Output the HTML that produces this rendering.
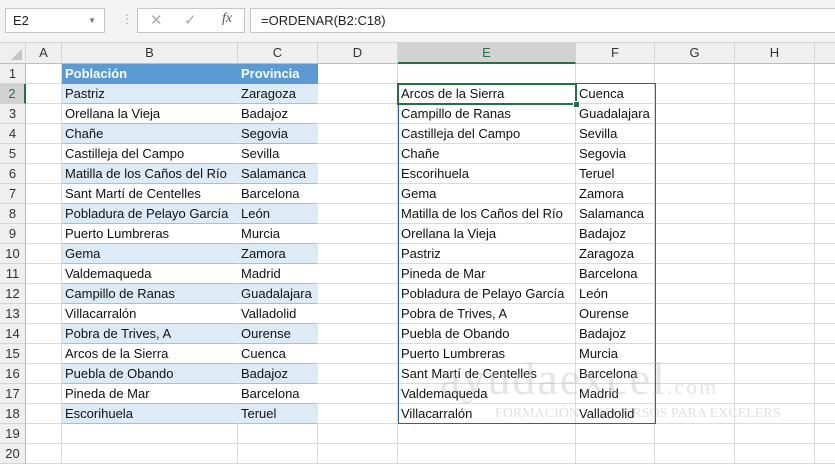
<!DOCTYPE html>
<html><head><meta charset="utf-8"><style>
body{margin:0;width:835px;height:466px;overflow:hidden;background:#fff;font-family:"Liberation Sans",sans-serif;position:relative}
.top{position:absolute;left:0;top:0;width:835px;height:42px;background:#f3f3f3;border-bottom:1px solid #d4d4d4}
.nb{position:absolute;left:5px;top:8px;width:100px;height:25px;background:#fff;border:1px solid #c6c6c6;box-sizing:border-box;font-size:13px;line-height:23px;padding-left:7px;color:#222}
.fx{position:absolute;left:137px;top:8px;width:108px;height:25px;background:#fff;border:1px solid #c6c6c6;box-sizing:border-box}
.fb{position:absolute;left:250px;top:8px;width:590px;height:25px;background:#fff;border:1px solid #c6c6c6;box-sizing:border-box;font-size:13px;line-height:23px;padding-left:10px;color:#222}
.ch{position:absolute;top:43px;height:21px;background:#efefef;border-right:1px solid #d4d4d4;border-bottom:1px solid #bdbdbd;box-sizing:border-box;text-align:center;font-size:13px;line-height:20px;color:#333}
.rh{position:absolute;left:0;width:26px;height:20px;background:#efefef;border-bottom:1px solid #d4d4d4;border-right:1px solid #bdbdbd;box-sizing:border-box;text-align:center;font-size:13px;line-height:20px;color:#333}
.c{position:absolute;height:20px;box-sizing:border-box;border-right:1px solid #dadada;border-bottom:1px solid #dadada;font-size:13px;line-height:20px;padding-left:3px;white-space:nowrap;overflow:hidden;color:#111}
</style></head><body>
<div class="top">
<div class="nb">E2<span style="position:absolute;right:8px;top:0;font-size:8px;color:#777">▼</span></div>
<div style="position:absolute;left:121px;top:12px;color:#aaa;font-size:12px">⋮</div>
<div class="fx"><span style="position:absolute;left:12px;top:2px;color:#aaa;font-size:15px">✕</span><span style="position:absolute;left:46px;top:2px;color:#aaa;font-size:15px">✓</span><span style="position:absolute;left:84px;top:2px;color:#555;font-size:14px;font-style:italic;font-family:'Liberation Serif',serif">fx</span></div>
<div class="fb">=ORDENAR(B2:C18)</div>
</div>
<div id="g"></div>
<div style="position:absolute;left:440px;top:352px;font-size:46px;color:rgba(180,180,180,0.35);font-family:'Liberation Serif',serif;letter-spacing:2px">ayudaexcel<span style="font-size:22px">.com</span></div>
<div style="position:absolute;left:495px;top:406px;font-size:14px;color:rgba(180,180,180,0.4);font-family:'Liberation Serif',serif">FORMACIÓN Y RECURSOS PARA EXCELERS</div>
<script>
var cols=[["A",26,62],["B",62,238],["C",238,318],["D",318,398],["E",398,576],["F",576,655],["G",655,735],["H",735,815],["I",815,900]];
var B=["Pastriz","Orellana la Vieja","Chañe","Castilleja del Campo","Matilla de los Caños del Río","Sant Martí de Centelles","Pobladura de Pelayo García","Puerto Lumbreras","Gema","Valdemaqueda","Campillo de Ranas","Villacarralón","Pobra de Trives, A","Arcos de la Sierra","Puebla de Obando","Pineda de Mar","Escorihuela"];
var C=["Zaragoza","Badajoz","Segovia","Sevilla","Salamanca","Barcelona","León","Murcia","Zamora","Madrid","Guadalajara","Valladolid","Ourense","Cuenca","Badajoz","Barcelona","Teruel"];
var E=["Arcos de la Sierra","Campillo de Ranas","Castilleja del Campo","Chañe","Escorihuela","Gema","Matilla de los Caños del Río","Orellana la Vieja","Pastriz","Pineda de Mar","Pobladura de Pelayo García","Pobra de Trives, A","Puebla de Obando","Puerto Lumbreras","Sant Martí de Centelles","Valdemaqueda","Villacarralón"];
var F=["Cuenca","Guadalajara","Sevilla","Segovia","Teruel","Zamora","Salamanca","Badajoz","Zaragoza","Barcelona","León","Ourense","Badajoz","Murcia","Barcelona","Madrid","Valladolid"];
var h='<div class="ch" style="left:0;width:26px"><span style="position:absolute;right:3px;bottom:3px;width:0;height:0;border-left:11px solid transparent;border-bottom:11px solid #c4c4c4"></span></div>';
cols.forEach(function(c){var s=c[0]=="E"?"background:#d2d2d2;border-bottom:2px solid #217346;color:#217346":"";h+='<div class="ch" style="left:'+c[1]+'px;width:'+(c[2]-c[1])+'px;'+s+'">'+c[0]+'</div>';});
for(var r=1;r<=20;r++){var y=64+(r-1)*20;
h+='<div class="rh" style="top:'+y+'px;'+(r==2?'background:#d2d2d2;border-right:2px solid #217346;color:#217346':'')+'">'+r+'</div>';
cols.forEach(function(c){var t="",st="";var n=c[0];
if((n=="B"||n=="C")&&r<=18){ if(r==1){t=n=="B"?"Población":"Provincia";st="background:#5b9bd5;color:#fff;font-weight:bold;border-color:#5b9bd5";}
else{t=(n=="B"?B:C)[r-2];st="background:"+(r%2==0?"#ddebf7":"#fff")+";border-right-color:"+(r%2==0?"#ddebf7":"#fff")+";border-bottom-color:#9bc2e6";}}
if((n=="E"||n=="F")&&r>=2&&r<=18){t=(n=="E"?E:F)[r-2];}
h+='<div class="c" style="left:'+c[1]+'px;top:'+y+'px;width:'+(c[2]-c[1])+'px;'+st+'">'+t+'</div>';});}
h+='<div style="position:absolute;left:398px;top:83px;width:258px;height:341px;border:1px solid #2e5f9e;box-sizing:border-box"></div>';
h+='<div style="position:absolute;left:397px;top:83px;width:180px;height:22px;border:2px solid #217346;box-sizing:border-box"></div>';
h+='<div style="position:absolute;left:573px;top:101px;width:5px;height:5px;background:#217346;border:1px solid #fff"></div>';
document.getElementById("g").innerHTML=h;
</script>
</body></html>
